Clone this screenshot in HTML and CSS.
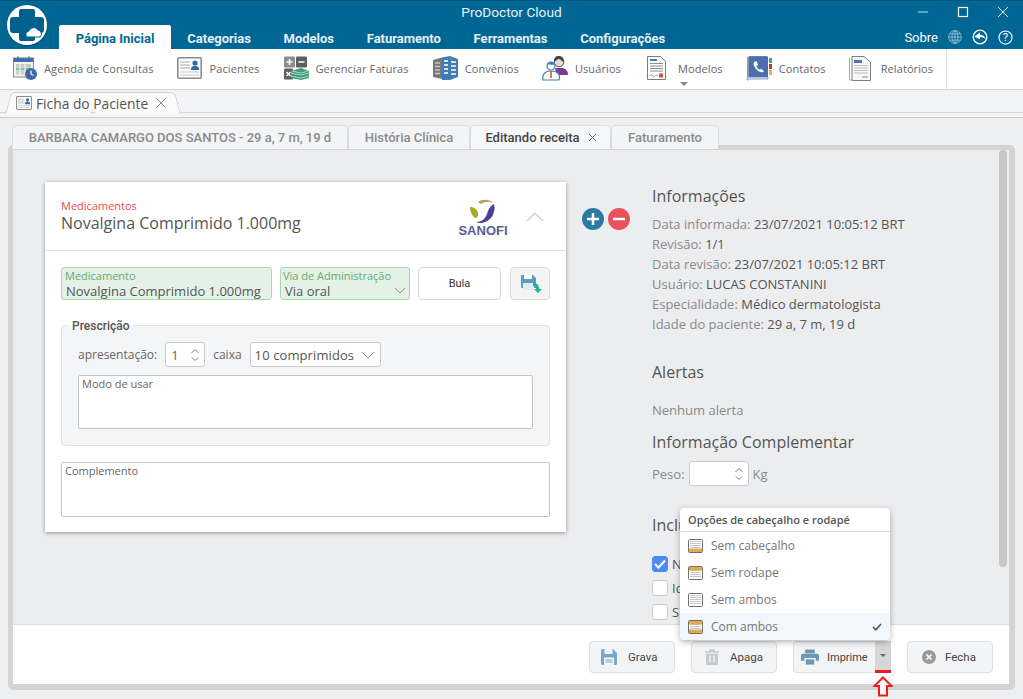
FILE: index.html
```html
<!DOCTYPE html>
<html lang="pt-BR">
<head>
    <meta charset="UTF-8">
    <title>ProDoctor Cloud</title>
    <link rel="stylesheet" href="styles.css">
</head>
<body>
    <svg class="sprite" width="0" height="0">
        <symbol id="ficha" viewBox="0 0 25 22">
            <rect x="0.8" y="0.8" width="23.4" height="20.4" rx="1" fill="#fff" stroke="#8c8c8c" stroke-width="1.6"/>
            <path d="M3 5h10M3 8h10M3 11h10" stroke="#a9a9a9" stroke-width="1.2"/>
            <path d="M3 15h19M3 18h19" stroke="#c4c4c4" stroke-width="1.2"/>
            <circle cx="18" cy="6" r="2.6" fill="#2f6db0"/>
            <path d="M13.8 13c0-3 1.8-4.2 4.2-4.2s4.2 1.2 4.2 4.2z" fill="#2f6db0"/>
        </symbol>
        <symbol id="folha" viewBox="0 0 15 14">
            <rect x="0.5" y="0.5" width="14" height="13" rx="1" fill="#fff" stroke="#6f6f6f"/>
            <path d="M2 2.500h11M2 4.500h11M2 6.500h11M2 8.500h11M2 10.500h11" stroke="#c6c6c6"/>
        </symbol>
        <symbol id="seta-cima-baixo" viewBox="0 0 10 16">
            <path d="M1.5 6l3.5-3.5L8.500 6M2 10.500l3 3 3-3" fill="none" stroke="#777" stroke-width="1"/>
        </symbol>
        <symbol id="seta-baixo" viewBox="0 0 16 9">
            <path d="M1 1l7 7 7-7" fill="none" stroke="#777" stroke-width="1"/>
        </symbol>
    </svg>

    <header class="topo">
        <svg class="logo" width="40" height="40" viewBox="0 0 40 40">
            <circle cx="20" cy="20" r="20" fill="#fff"/>
            <path d="M14 4h12a2 2 0 0 1 2 2v6h6a3 3 0 0 1 3 3v10a3 3 0 0 1-3 3h-6v6a2 2 0 0 1-2 2H14a2 2 0 0 1-2-2v-6H6a3 3 0 0 1-3-3V15a3 3 0 0 1 3-3h6V6a2 2 0 0 1 2-2z" fill="#00618f"/>
            <path d="M20 32a3.500 3.500 0 0 1 2-6 5 5 0 0 1 9-1 4 4 0 0 1 2 7z" fill="#fff" stroke="#00618f" stroke-width="1"/>
        </svg>
        <div class="barra-titulo">
            <span></span>
            <span class="titulo">ProDoctor Cloud</span>
            <div class="janela-botoes">
                <svg width="12" height="12" viewBox="0 0 12 12"><path d="M1 6h10" stroke="#8fbcd2" stroke-width="1.400"/></svg>
                <svg width="12" height="12" viewBox="0 0 12 12"><rect x="1.500" y="1.500" width="9" height="9" fill="none" stroke="#fff" stroke-width="1.200"/></svg>
                <svg width="12" height="12" viewBox="0 0 12 12"><path d="M1 1l10 10M11 1L1 11" stroke="#dcebf3" stroke-width="1"/></svg>
            </div>
        </div>
        <nav class="menu">
            <a class="menu-item ativo">Página Inicial</a>
            <a class="menu-item">Categorias</a>
            <a class="menu-item">Modelos</a>
            <a class="menu-item">Faturamento</a>
            <a class="menu-item">Ferramentas</a>
            <a class="menu-item">Configurações</a>
            <div class="menu-direita">
                <span class="sobre">Sobre</span>
                <svg width="14" height="14" viewBox="0 0 15 15" fill="none" stroke="#a9cfe0" stroke-width="0.800"><circle cx="7.500" cy="7.500" r="6.800"/><ellipse cx="7.500" cy="7.500" rx="3.200" ry="6.800"/><path d="M7.500 0.700v13.600M0.700 7.500h13.600M1.600 4.200h11.800M1.600 10.800h11.800"/></svg>
                <svg width="16" height="16" viewBox="0 0 16 16"><circle cx="8" cy="8" r="6.800" fill="none" stroke="#fff" stroke-width="1.300"/><path d="M2.500 7.500L8 3.500v2.300c3 0 5 1.500 5.500 4.500-1.300-1.500-3-2-5.500-2v2.200z" fill="#fff"/></svg>
                <svg width="15" height="15" viewBox="0 0 16 16"><circle cx="8" cy="8" r="7" fill="none" stroke="#fff" stroke-width="1.200"/><text class="ajuda" x="8" y="12" text-anchor="middle">?</text></svg>
            </div>
        </nav>
    </header>

    <div class="ribbon">
        <a class="rb-item rb-agenda">
            <svg width="24" height="24" viewBox="0 0 24 24">
                <rect x="0.500" y="2" width="20" height="19" fill="#f2f2f2" stroke="#8a8a8a"/>
                <rect x="0.500" y="2" width="20" height="4" fill="#3f6fa8"/>
                <path d="M5 0.500v3M16 0.500v3" stroke="#3f6fa8" stroke-width="1.500"/>
                <path d="M3 8h15v3H3z" fill="#c9c9c9"/><path d="M3 11.500h15v3H3z" fill="#8fc29a"/><path d="M3 15h11v3.500H3z" fill="#d0d0d0"/>
                <path d="M7 8v11M12 8v11" stroke="#fff"/>
                <circle cx="18" cy="18" r="6" fill="#3e68a8"/>
                <path d="M18 14.500V18l2.500 1.500" fill="none" stroke="#fff" stroke-width="1.200"/>
            </svg>
            <span>Agenda de Consultas</span>
        </a>
        <a class="rb-item rb-pacientes">
            <svg width="25" height="22"><use href="#ficha"/></svg>
            <span>Pacientes</span>
        </a>
        <a class="rb-item rb-faturas">
            <svg width="25" height="24" viewBox="0 0 25 24">
                <rect x="0" y="0.500" width="11" height="11" rx="1" fill="#8e8e8e"/>
                <rect x="12" y="0.500" width="11" height="11" rx="1" fill="#5f5f5f"/>
                <rect x="0" y="12.500" width="9" height="11" rx="1" fill="#5f5f5f"/>
                <path d="M5.500 3v6M2.500 6h6M14.500 6h6M2.500 16l4 4M6.500 16l-4 4" stroke="#fff" stroke-width="1.500"/>
                <path d="M7 15l10-3 8 3v7l-8 2-10-2z" fill="#3f9b77"/>
                <path d="M7 17l10 2 8-2M7 20l10 2 8-2M8 15l9 2 7-2" fill="none" stroke="#c6e6d6" stroke-width="0.800"/>
            </svg>
            <span>Gerenciar Faturas</span>
        </a>
        <a class="rb-item rb-convenios">
            <svg width="25" height="24" viewBox="0 0 25 24">
                <path d="M0 4l9-2.500V23L0 21z" fill="#777"/>
                <path d="M9 1.500L17 0l8 3v18l-8 3H9z" fill="#4379b7"/>
                <path d="M2 7h5M2 10.500h5M2 14h5M2 17.500h5" stroke="#c9c9c9" stroke-width="1.500"/>
                <path d="M11 5h4M11 9h4M11 13h4M11 17h4M18 6h5M18 10h5M18 14h5M18 18h5" stroke="#cfe0f0" stroke-width="2"/>
                <rect x="17" y="2.500" width="2.500" height="2" fill="#46a36f"/>
            </svg>
            <span>Convênios</span>
        </a>
        <a class="rb-item rb-usuarios">
            <svg width="26" height="25" viewBox="0 0 26 25">
                <circle cx="17" cy="6" r="4.800" fill="#e9d9c9" stroke="#555"/>
                <path d="M12 6c0-5 2-6 5-6s5 2 5 6c-2 0-3-3-5-3s-3 2-5 3z" fill="#444"/>
                <path d="M13 12h8c3 1 5 3 5 7h-11z" fill="#7d3b8f"/>
                <circle cx="9" cy="10" r="4" fill="#fff" stroke="#3f7ec0" stroke-width="1.200"/>
                <path d="M5 9c1-4 7-4 8 0-3 0-5-1-8 0z" fill="#3f7ec0"/>
                <path d="M1 24c-1-6 2-9 8-9s10 3 8 9z" fill="#fff" stroke="#3f7ec0" stroke-width="1.200"/>
                <path d="M9 15v7" stroke="#e0702a" stroke-width="1.800"/>
            </svg>
            <span>Usuários</span>
        </a>
        <a class="rb-item rb-modelos">
            <svg width="19" height="24" viewBox="0 0 19 24">
                <path d="M0.500 0.500h13l5 5v18H0.500z" fill="#fff" stroke="#7a7a7a"/>
                <rect x="3" y="3" width="7" height="2" fill="#3f7ec0"/>
                <path d="M3 7.500h13M3 10h13M3 12.500h13M3 15h13" stroke="#8a8a8a"/>
                <path d="M3 20c1-2 2-2 3 0s2 0 3-1 1 1 2 1" fill="none" stroke="#3f7ec0" stroke-width="0.800"/>
                <rect x="12" y="17.500" width="4" height="4" fill="#d9534f"/>
            </svg>
            <span class="rb-rotulo">Modelos</span>
            <i class="rb-seta"></i>
        </a>
        <a class="rb-item rb-contatos">
            <svg width="26" height="25" viewBox="0 0 26 25">
                <path d="M1 1.500L3 0h18v22H3l-2 2z" fill="#8a99ad"/>
                <rect x="3" y="0.500" width="19" height="21.500" fill="#4a6fb0"/>
                <path d="M1 22.500c0-1 1-1.500 2-1.500h19v2H3l-.5 1H1z" fill="#dfe6f0" stroke="#4a6fb0" stroke-width="0.600"/>
                <path d="M8 6c-1 2 0 5 2.500 7.500S16 17 18 15.500l-2.500-2.800-2 1c-1.500-.8-2.500-2.200-3-3.500l1.500-1.500L10.500 5z" fill="#fff"/>
                <rect x="23" y="2" width="3" height="5" fill="#4fa35c"/>
                <rect x="23" y="8" width="3" height="5" fill="#b33c2e"/>
                <rect x="23" y="14" width="3" height="5" fill="#e3b341"/>
            </svg>
            <span>Contatos</span>
        </a>
        <a class="rb-item rb-relatorios">
            <svg width="22" height="25" viewBox="0 0 22 25">
                <path d="M3 0.500h12l6.500 6v18H3z" fill="#f7f7f7" stroke="#7f7f7f"/>
                <path d="M0.500 2v22h3" fill="none" stroke="#a9a9a9"/>
                <rect x="5" y="4" width="8" height="3" fill="#4a78b5"/>
                <path d="M5 9.500h14M5 12h14M5 14.500h14M5 17h14" stroke="#bdbdbd"/>
                <path d="M13 21h6" stroke="#888"/>
            </svg>
            <span>Relatórios</span>
        </a>
        <div class="rb-fim"></div>
    </div>

    <div class="faixa-doc">
        <div class="aba-doc">
            <svg width="16" height="14"><use href="#ficha"/></svg>
            <span>Ficha do Paciente</span>
            <svg width="12" height="12" viewBox="0 0 12 12"><path d="M1.500 1.500l9 9M10.500 1.500l-9 9" stroke="#888" stroke-width="1"/></svg>
        </div>
    </div>

    <main class="area">
        <div class="abas">
            <a class="aba aba-nome">BARBARA CAMARGO DOS SANTOS - 29 a, 7 m, 19 d</a>
            <a class="aba aba-historia">História Clínica</a>
            <a class="aba aba-ativa">Editando receita
                <svg width="9" height="9" viewBox="0 0 9 9"><path d="M1 1l7 7M8 1L1 8" stroke="#666" stroke-width="1"/></svg>
            </a>
            <a class="aba aba-fat">Faturamento</a>
        </div>

        <section class="painel">
            <div class="corpo">
                <div class="cartao">
                    <div class="cartao-topo">
                        <div class="cartao-titulos">
                            <div class="rotulo-med">Medicamentos</div>
                            <div class="nome-med">Novalgina Comprimido 1.000mg</div>
                        </div>
                        <div class="sanofi">
                            <svg width="26" height="25" viewBox="0 0 26 25">
                                <path d="M8 3C12 0 20 0 23 4 18 1.500 13 3 11 5z" fill="#b89a6a"/>
                                <path d="M0 8c4 0 7 2 8 6 .5 3-1 5-3 5C2 17 0 12 0 8z" fill="#a3ad1f"/>
                                <path d="M24 5c2 6-1 17-12 19-2 0-4 0-6-1 6 0 9-3 11-8 1-4 3-8 7-10z" fill="#4b3f98"/>
                            </svg>
                            <span>SANOFI</span>
                        </div>
                        <svg class="recolher" width="18" height="11" viewBox="0 0 18 11"><path d="M1 10l8-8 8 8" fill="none" stroke="#cfcfcf" stroke-width="1.400"/></svg>
                    </div>
                    <div class="cartao-corpo">
                        <div class="linha-campos">
                            <div class="campo-verde campo-med">
                                <label>Medicamento</label>
                                <div class="valor">Novalgina Comprimido 1.000mg</div>
                            </div>
                            <div class="campo-verde campo-via">
                                <label>Via de Administração</label>
                                <div class="valor">Via oral</div>
                                <svg class="via-seta" width="12" height="7"><use href="#seta-baixo"/></svg>
                            </div>
                            <button class="btn-bula">Bula</button>
                            <button class="btn-salvar">
                                <svg width="21" height="18" viewBox="0 0 21 18">
                                    <path d="M0 1a1 1 0 0 1 1-1h11l3 3v10H1a1 1 0 0 1-1-1z" fill="#5d9bc0"/>
                                    <rect x="3" y="0" width="8" height="4" fill="#fff"/>
                                    <rect x="2" y="8" width="11" height="7" fill="#dfeaf2"/>
                                    <path d="M12 8c4 0 6 2 6 6h3l-4 4-4-4h2c0-2-1-3-3-3z" fill="#1fb58f"/>
                                </svg>
                            </button>
                        </div>

                        <fieldset class="prescricao">
                            <legend>Prescrição</legend>
                            <div class="linha-apres">
                                <span>apresentação:</span>
                                <div class="numero"><span>1</span><svg width="10" height="16"><use href="#seta-cima-baixo"/></svg></div>
                                <span>caixa</span>
                                <div class="selecao"><span>10 comprimidos</span><svg width="14" height="8"><use href="#seta-baixo"/></svg></div>
                            </div>
                            <div class="texto-area modo">Modo de usar</div>
                        </fieldset>

                        <div class="texto-area complemento">Complemento</div>
                    </div>
                </div>

                <div class="mais-menos">
                    <svg width="22" height="22" viewBox="0 0 22 22"><circle cx="11" cy="11" r="11" fill="#2a7ba3"/><path d="M11 5v12M5 11h12" stroke="#fff" stroke-width="2.500"/></svg>
                    <svg width="22" height="22" viewBox="0 0 22 22"><circle cx="11" cy="11" r="11" fill="#e9525a"/><path d="M5 11h12" stroke="#fff" stroke-width="2.500"/></svg>
                </div>

                <div class="info">
                    <h2>Informações</h2>
                    <ul class="info-lista">
                        <li>Data informada: <b>23/07/2021 10:05:12 BRT</b></li>
                        <li>Revisão: <b>1/1</b></li>
                        <li>Data revisão: <b>23/07/2021 10:05:12 BRT</b></li>
                        <li>Usuário: <b>LUCAS CONSTANINI</b></li>
                        <li>Especialidade: <b>Médico dermatologista</b></li>
                        <li>Idade do paciente: <b>29 a, 7 m, 19 d</b></li>
                    </ul>
                    <h2 class="h-alertas">Alertas</h2>
                    <p class="nenhum">Nenhum alerta</p>
                    <h2 class="h-compl">Informação Complementar</h2>
                    <div class="linha-peso">
                        <span>Peso:</span>
                        <div class="numero peso"><svg width="10" height="16"><use href="#seta-cima-baixo"/></svg></div>
                        <span>Kg</span>
                    </div>
                    <h2 class="h-inclui">Inclui</h2>
                    <div class="checks">
                        <label class="check"><i class="caixa marcada"><svg width="12" height="10" viewBox="0 0 12 10"><path d="M1 5l3.500 3.500L11 1.500" fill="none" stroke="#fff" stroke-width="2"/></svg></i>N</label>
                        <label class="check"><i class="caixa"></i>Id</label>
                        <label class="check"><i class="caixa"></i>S</label>
                    </div>
                </div>

                <div class="rolagem"></div>
            </div>

            <footer class="rodape">
                <button class="btn btn-grava">
                    <svg width="16" height="16" viewBox="0 0 16 16"><path d="M0 1.500A1.500 1.500 0 0 1 1.500 0H12l4 4v10.500a1.500 1.500 0 0 1-1.500 1.500h-13A1.500 1.500 0 0 1 0 14.500z" fill="#79a9c9"/><rect x="3.500" y="0" width="8" height="5" fill="#f3f4f6"/><rect x="3" y="8.500" width="10" height="7.500" fill="#f3f4f6"/><path d="M4.500 11h7M4.500 13h7" stroke="#79a9c9"/></svg>
                    Grava
                </button>
                <button class="btn btn-apaga">
                    <svg width="14" height="16" viewBox="0 0 14 16"><path d="M0 2h14v1.500H0zM4.500 0h5v2h-5zM1 4.500h12V16H1z" fill="#c2c9d0"/><path d="M5 6.500v7M9 6.500v7" stroke="#f3f4f6" stroke-width="1.500"/></svg>
                    Apaga
                </button>
                <div class="grupo-imprime">
                    <button class="btn btn-imprime">
                        <svg width="18" height="16" viewBox="0 0 19 16"><path d="M4.500 0h10v4h-10zM2 4.500h15a2 2 0 0 1 2 2V12h-3.500V9h-12v3H0V6.500a2 2 0 0 1 2-2z" fill="#6d97b5"/><rect x="5" y="10.500" width="9" height="5.500" fill="#6d97b5"/></svg>
                        Imprime
                    </button>
                    <div class="imprime-seta"><i></i></div>
                </div>
                <button class="btn btn-fecha">
                    <svg width="14" height="14" viewBox="0 0 14 14"><circle cx="7" cy="7" r="7" fill="#9a9a9a"/><path d="M4.500 4.500l5 5M9.500 4.500l-5 5" stroke="#fff" stroke-width="1.600"/></svg>
                    Fecha
                </button>
            </footer>

            <div class="cab-menu">
                <div class="cab-titulo">Opções de cabeçalho e rodapé</div>
                <div class="cab-item">
                    <svg width="15" height="14" viewBox="0 0 15 14"><use href="#folha"/><rect x="1" y="9.500" width="13" height="3.500" fill="#e3a94e"/></svg>
                    Sem cabeçalho
                </div>
                <div class="cab-item">
                    <svg width="15" height="14" viewBox="0 0 15 14"><use href="#folha"/><rect x="1" y="1" width="13" height="3.500" fill="#e3a94e"/></svg>
                    Sem rodape
                </div>
                <div class="cab-item">
                    <svg width="15" height="14" viewBox="0 0 15 14"><use href="#folha"/></svg>
                    Sem ambos
                </div>
                <div class="cab-item cab-sel">
                    <svg width="15" height="14" viewBox="0 0 15 14"><use href="#folha"/><rect x="1" y="1" width="13" height="3.500" fill="#e3a94e"/><rect x="1" y="9.500" width="13" height="3.500" fill="#e3a94e"/></svg>
                    Com ambos
                    <svg class="cab-check" width="10" height="8" viewBox="0 0 10 8"><path d="M1 4l2.800 2.800L9 1" fill="none" stroke="#555" stroke-width="1.600"/></svg>
                </div>
            </div>
        </section>

        <svg class="seta-vermelha" width="20" height="21" viewBox="0 0 20 21"><path d="M10 1.500L18.500 10H14v9.500H6V10H1.500z" fill="#fff" stroke="#ed1c24" stroke-width="2"/></svg>
    </main>
</body>
</html>
```

FILE: styles.css
```css
* {
    box-sizing: border-box;
}

html, body {
    height: 100%;
}

body {
    margin: 0;
    height: 699px;
    overflow: hidden;
    display: flex;
    flex-direction: column;
    background-color: #eeeff1;
    font-family: "Open Sans", sans-serif;
    color: #555;
}

.sprite {
    position: absolute;
}

/* topo azul */
.topo {
    position: relative;
    height: 49px;
    flex: none;
    background-color: #006795;
    border-top: 1px solid #00557c;
    color: #fff;
}

.logo {
    position: absolute;
    left: 7px;
    top: 4px;
    filter: drop-shadow(0 1px 1px rgba(0, 0, 0, 0.25));
}

.barra-titulo {
    height: 24px;
    padding-bottom: 2px;
    display: grid;
    grid-template-columns: 1fr auto 1fr;
    align-items: center;
}

.titulo {
    font-family: Roboto, sans-serif;
    font-size: 13.700px;
    color: #e8f1f6;
}

.janela-botoes {
    display: flex;
    justify-content: flex-end;
    gap: 28px;
    padding-right: 14px;
}

.menu {
    height: 24px;
    display: flex;
    padding-left: 59px;
}

.menu-item {
    font-family: Roboto, sans-serif;
    font-weight: 700;
    font-size: 13px;
    line-height: 28px;
    padding: 0 16.350px;
    color: #e6f0f5;
}

.menu-item.ativo {
    width: 112px;
    background-color: #fff;
    color: #006795;
    padding: 0;
    text-align: center;
    border-radius: 2px 2px 0 0;
}

.menu-direita {
    margin-left: auto;
    display: flex;
    align-items: center;
    gap: 10px;
    padding-right: 10px;
}

.sobre {
    font-family: Roboto, sans-serif;
    font-size: 13px;
}

.ajuda {
    font-family: Roboto, sans-serif;
    font-size: 12px;
    fill: #fff;
}

/* ribbon */
.ribbon {
    height: 41px;
    flex: none;
    display: flex;
    align-items: center;
    padding-bottom: 2px;
    background-color: #fff;
    border-bottom: 1px solid #d3d3d3;
    font-size: 11px;
    letter-spacing: 0.1px;
    color: #666;
}

.rb-item {
    position: relative;
    display: flex;
    align-items: center;
    gap: 7px;
}

.rb-agenda { margin-left: 13px; }
.rb-pacientes { margin-left: 23px; gap: 8px; }
.rb-faturas { margin-left: 24px; }
.rb-convenios { margin-left: 24px; }
.rb-usuarios { margin-left: 23px; }
.rb-modelos { margin-left: 26px; gap: 12px; }
.rb-contatos { margin-left: 23px; }
.rb-relatorios { margin-left: 23px; gap: 10px; }

.rb-seta {
    position: absolute;
    left: 33px;
    bottom: -6px;
    border: 4px solid transparent;
    border-top: 4px solid #888;
    border-bottom: 0;
}

.rb-fim {
    margin-left: 13px;
    align-self: stretch;
    margin-bottom: -2px;
    border-left: 1px solid #e0e0e0;
}

/* aba do documento */
.faixa-doc {
    height: 28px;
    flex: none;
    padding: 2px 0 0 8px;
    background-color: #f3f4f6;
    border-bottom: 1px solid #cfcfcf;
    box-shadow: inset 0 -4px 0 #f3f4f6, inset 0 -5px 0 #d8d8d8;
}

.aba-doc {
    position: relative;
    width: 170px;
    height: 22px;
    display: flex;
    align-items: center;
    gap: 4px;
    padding-left: 8px;
    font-size: 13.800px;
    color: #555;
}

.aba-doc > * {
    position: relative;
    z-index: 1;
}

/* as duas metades inclinadas do fundo da aba */
.aba-doc::before,
.aba-doc::after {
    content: "";
    position: absolute;
    top: 0;
    bottom: 0;
    background-color: #fbfbfb;
    border-top: 1px solid #cfcfcf;
}

.aba-doc::before {
    left: 0;
    right: 50%;
    border-left: 1px solid #cfcfcf;
    border-radius: 5px 0 0 0;
    transform: skewX(-14deg);
}

.aba-doc::after {
    left: 50%;
    right: 0;
    border-right: 1px solid #cfcfcf;
    border-radius: 0 5px 0 0;
    transform: skewX(14deg);
}

.aba-doc span {
    margin-right: 3px;
}

/* area de trabalho */
.area {
    position: relative;
    flex: 1;
    min-height: 0;
    padding: 7px 8px 9px;
    display: flex;
    flex-direction: column;
}

.abas {
    display: flex;
    height: 24px;
    margin-left: 4px;
    flex: none;
    position: relative;
    z-index: 2;
}

.aba {
    height: 24px;
    display: flex;
    align-items: center;
    justify-content: center;
    gap: 8px;
    background-color: #f3f4f6;
    border: 1px solid #dcdcdc;
    border-bottom: 0;
    border-radius: 5px 5px 0 0;
    font-family: Roboto, sans-serif;
    font-weight: 500;
    font-size: 13px;
    color: #8a8a8a;
}

.aba-nome { width: 336px; }
.aba-historia { width: 122px; }
.aba-ativa { width: 141px; padding-left: 1px; color: #444; background-color: #f6f7f8; }
.aba-fat { width: 108px; }

.painel {
    position: relative;
    flex: 1;
    min-height: 0;
    margin-top: -4px;
    display: flex;
    flex-direction: column;
    border: solid #d4d4d4;
    border-width: 5px 6px 6px 5px;
    border-radius: 5px;
    background-color: #ecedef;
}

.corpo {
    flex: 1;
    min-height: 0;
    overflow: hidden;
    display: flex;
    align-items: flex-start;
    padding: 32px 2px 0 32px;
}

.rolagem {
    position: relative;
    top: -32px;
    margin-left: auto;
    width: 8px;
    height: 417px;
    flex: none;
    background-color: #c6c6c6;
    border-radius: 4px;
}

/* cartao do medicamento */
.cartao {
    width: 521px;
    height: 350px;
    flex: none;
    background-color: #fff;
    box-shadow: 0 1px 4px rgba(0, 0, 0, 0.4);
}

.cartao-topo {
    height: 69px;
    display: flex;
    align-items: center;
    padding: 0 22px 0 16px;
    border-bottom: 1px solid #e2e2e2;
}

.cartao-titulos {
    flex: 1;
}

.rotulo-med {
    font-size: 11px;
    line-height: 13px;
    color: #f44848;
}

.nome-med {
    font-size: 16px;
    line-height: 22px;
    color: #555;
}

.sanofi {
    width: 48px;
    display: flex;
    flex-direction: column;
    align-items: center;
    margin-right: 19px;
    padding-top: 3px;
}

.sanofi span {
    font-family: "Liberation Sans", sans-serif;
    font-weight: 700;
    font-size: 13px;
    line-height: 13px;
    color: #5b5b9b;
}

.cartao-corpo {
    padding: 16px 16px 0;
}

.linha-campos {
    display: flex;
    height: 33px;
}

.campo-verde {
    position: relative;
    height: 33px;
    padding-top: 1px;
    background-color: #e3f1e6;
    border: 1px solid #a8d8ae;
    border-radius: 3px;
    overflow: hidden;
}

.campo-med {
    width: 211px;
    padding-left: 3px;
}

.campo-via {
    width: 130px;
    margin-left: 8px;
    padding-left: 2px;
}

.campo-verde label {
    display: block;
    font-size: 11px;
    line-height: 14px;
    color: #63ab6f;
}

.campo-med .valor {
    padding-left: 1px;
}

.campo-verde .valor {
    font-size: 13px;
    line-height: 16px;
    color: #555;
}

.campo-via .valor {
    padding-left: 2px;
}

.via-seta {
    position: absolute;
    right: 3px;
    bottom: 5px;
}

.btn-bula {
    width: 83px;
    height: 33px;
    margin-left: 8px;
    background-color: #fff;
    border: 1px solid #d8d8d8;
    border-radius: 4px;
    font-family: Roboto, sans-serif;
    font-size: 11px;
    color: #333;
}

.btn-salvar {
    width: 40px;
    height: 33px;
    margin-left: 9px;
    padding: 0 0 0 2px;
    display: flex;
    align-items: center;
    justify-content: center;
    background-color: #f3f4f6;
    border: 1px solid #dcdcdc;
    border-radius: 4px;
}

.prescricao {
    height: 121px;
    margin: 25px 0 0;
    padding: 16px 16px 0;
    background-color: #f4f5f7;
    border: 1px solid #e0e1e3;
    border-radius: 4px;
}

.prescricao legend {
    padding: 0 4px 0 6px;
    margin-left: -12px;
    height: 0;
    font-family: Roboto, sans-serif;
    font-weight: 500;
    font-size: 12px;
    line-height: 0;
    color: #555;
    background-color: #fff;
}

.linha-apres {
    display: flex;
    align-items: center;
    height: 25px;
    font-size: 12px;
    color: #666;
}

.numero {
    width: 40px;
    height: 25px;
    margin: 0 8px 0 8px;
    padding: 0 4px 0 5px;
    display: flex;
    align-items: center;
    justify-content: space-between;
    background-color: #fff;
    border: 1px solid #ccc;
    border-radius: 3px;
    font-size: 13px;
}

.selecao {
    width: 131px;
    height: 25px;
    margin-left: 8px;
    padding: 0 5px 0 4px;
    display: flex;
    align-items: center;
    justify-content: space-between;
    background-color: #fff;
    border: 1px solid #ccc;
    border-radius: 3px;
    font-size: 13px;
    letter-spacing: 0.1px;
    color: #555;
}

.texto-area {
    background-color: #fff;
    border: 1px solid #c4c4c4;
    border-radius: 2px;
    padding: 1px 3px;
    font-size: 11px;
    line-height: 13px;
    color: #666;
}

.modo {
    height: 54px;
    margin-top: 8px;
}

.complemento {
    height: 55px;
    margin-top: 16px;
}

/* + e - */
.mais-menos {
    display: flex;
    gap: 4px;
    flex: none;
    margin: 26px 0 0 16px;
}

/* coluna de informacoes */
.info {
    flex: none;
    margin: 3px 0 0 22px;
    width: 330px;
    font-size: 13px;
    color: #8a8a8a;
}

.info h2 {
    margin: 0;
    font-weight: 400;
    font-size: 16px;
    line-height: 22px;
    color: #555;
}

.info-lista {
    list-style: none;
    margin: 7px 0 0;
    padding: 0;
}

.info-lista li {
    height: 20px;
    line-height: 20px;
    white-space: nowrap;
}

.info-lista b {
    font-weight: 400;
    color: #555;
}

.info .h-alertas {
    margin-top: 27px;
}

.nenhum {
    margin: 18px 0 0;
    line-height: 18px;
}

.info .h-compl {
    margin-top: 12px;
}

.linha-peso {
    display: flex;
    align-items: center;
    height: 25px;
    margin-top: 8px;
}

.numero.peso {
    width: 60px;
    margin: 0 4px 0 4px;
    justify-content: flex-end;
}

.info .h-inclui {
    margin-top: 28px;
}

.checks {
    margin-top: 20px;
    display: flex;
    flex-direction: column;
    gap: 8px;
}

.check {
    display: flex;
    align-items: center;
    gap: 4px;
    height: 16px;
    font-size: 13px;
    color: #555;
}

.caixa {
    width: 16px;
    height: 16px;
    display: flex;
    align-items: center;
    justify-content: center;
    background-color: #fff;
    border: 1px solid #c9c9c9;
    border-radius: 3px;
}

.caixa.marcada {
    background-color: #4f8af5;
    border-color: #4f8af5;
}

/* rodape com botoes */
.rodape {
    height: 60px;
    flex: none;
    display: flex;
    justify-content: flex-end;
    gap: 16px;
    padding: 16px 16px 0 0;
    background-color: #fff;
    border-top: 1px solid #dedede;
}

.btn {
    width: 86px;
    height: 32px;
    display: flex;
    align-items: center;
    gap: 11px;
    background-color: #f3f4f6;
    border: 1px solid #dfe0e2;
    border-radius: 4px;
    font-family: Roboto, sans-serif;
    font-size: 11.500px;
    color: #444;
}

.btn-grava { padding: 0 0 0 11px; }
.btn-apaga { padding: 0 0 0 13px; }

.grupo-imprime {
    display: flex;
    height: 32px;
}

.btn-imprime {
    width: 82px;
    padding: 0 0 0 7px;
    gap: 8px;
    font-size: 11px;
    border-radius: 4px 0 0 4px;
    border-right: 0;
}

.btn-fecha {
    padding: 0 0 0 14px;
    gap: 9px;
}

.imprime-seta {
    width: 16px;
    height: 32px;
    display: flex;
    justify-content: center;
    padding-top: 13px;
    background-color: #d6d6d6;
    border-bottom: 3px solid #ed1c24;
}

.imprime-seta i {
    width: 0;
    height: 0;
    border: 3px solid transparent;
    border-top: 3px solid #666;
    border-bottom: 0;
}

/* menu suspenso */
.cab-menu {
    position: absolute;
    left: 667px;
    top: 358px;
    width: 210px;
    height: 132px;
    background-color: #fff;
    border-radius: 4px;
    box-shadow: 0 2px 6px rgba(0, 0, 0, 0.3);
    overflow: hidden;
    z-index: 5;
}

.cab-titulo {
    height: 24px;
    padding-left: 8px;
    border-bottom: 1px solid #dcdcdc;
    font-weight: 600;
    font-size: 11px;
    line-height: 23px;
    color: #555;
}

.cab-item {
    position: relative;
    height: 27px;
    display: flex;
    align-items: center;
    gap: 8px;
    padding-left: 8px;
    font-size: 12px;
    color: #777;
}

.cab-sel {
    background-color: #f1f7fc;
}

.cab-check {
    position: absolute;
    right: 8px;
    top: 10px;
}

.seta-vermelha {
    position: absolute;
    left: 873px;
    top: 558px;
    z-index: 6;
}
```
